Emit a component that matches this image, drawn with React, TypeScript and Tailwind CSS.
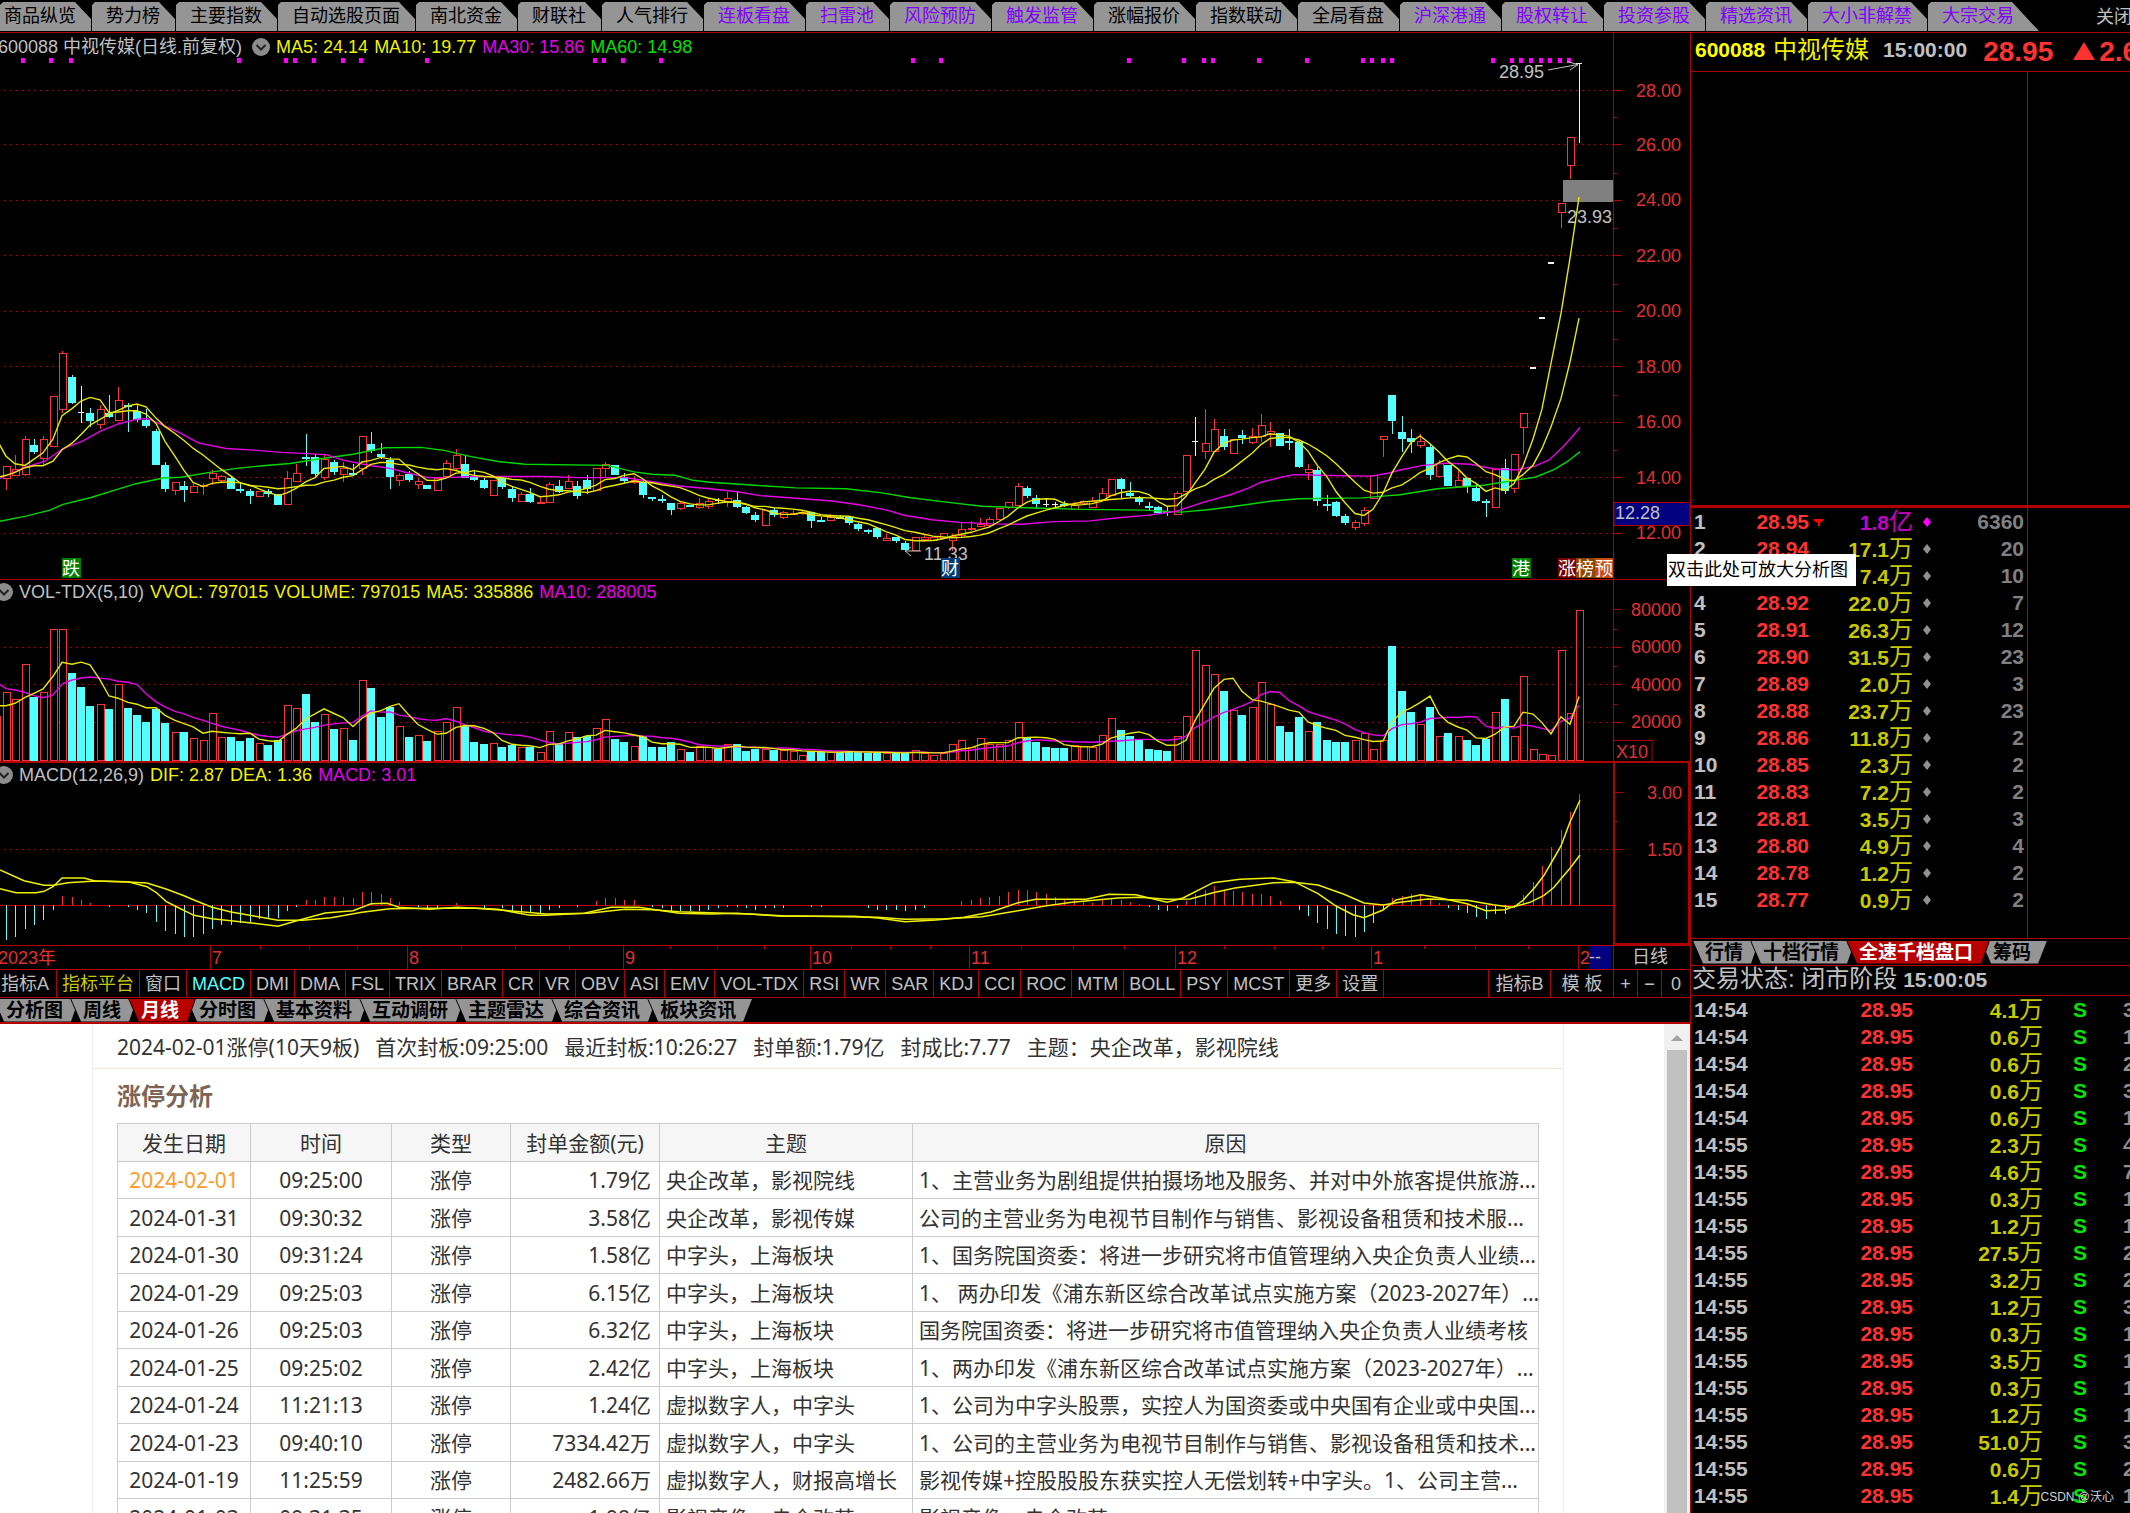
import React from "react";

/* ---------- top navigation ---------- */

const topTabs: { label: string; accent?: boolean }[] = [
  { label: "商品纵览" },
  { label: "势力榜" },
  { label: "主要指数" },
  { label: "自动选股页面" },
  { label: "南北资金" },
  { label: "财联社" },
  { label: "人气排行" },
  { label: "连板看盘", accent: true },
  { label: "扫雷池", accent: true },
  { label: "风险预防", accent: true },
  { label: "触发监管", accent: true },
  { label: "涨幅报价" },
  { label: "指数联动" },
  { label: "全局看盘" },
  { label: "沪深港通", accent: true },
  { label: "股权转让", accent: true },
  { label: "投资参股", accent: true },
  { label: "精选资讯", accent: true },
  { label: "大小非解禁", accent: true },
  { label: "大宗交易", accent: true },
];

function TopBar() {
  return (
    <nav className="flex h-[33px] shrink-0 gap-px overflow-hidden border-b border-[#b00000] bg-black pt-[2px]">
      {topTabs.map((t, i) => {
        const first = i === 0;
        const last = i === topTabs.length - 1;
        const shape = last
          ? "pl-[14px] pr-[25px] [clip-path:polygon(3px_0,calc(100%_-_27px)_0,100%_100%,0_100%,0_3px)]"
          : "pr-[15px] [clip-path:polygon(3px_0,calc(100%_-_16px)_0,100%_17px,100%_100%,0_100%,0_3px)]";
        const left = first ? "pl-1" : last ? "" : "pl-[14px]";
        return (
          <button
            key={t.label}
            type="button"
            className={`h-[29px] shrink-0 whitespace-nowrap bg-[#959595] text-[18px] leading-[29px] ${shape} ${left} ${
              t.accent ? "text-[#8000ff]" : "text-black"
            }`}
          >
            {t.label}
          </button>
        );
      })}
      <button type="button" className="ml-14 shrink-0 text-[18px] leading-[29px] text-[#c0c0c0]">
        关闭
      </button>
    </nav>
  );
}

/* ---------- chart data ----------
   kind, body top, body bottom, wick top, wick bottom, volume top, MACD bar end
   r: rising, c: falling, w/W: unchanged open and close (volume falling / rising) */

type Bar = { k: string; t: number; b: number; h: number; l: number; v: number; m: number };

const barText = `r 1217 1248 1217 1280 397 1137
r 1225 1240 1188 1245 418 1128
r 1147 1238 1140 1245 311 1105
c 1163 1180 1148 1187 412 1092
r 1147 1198 1138 1217 397 1078
r 1036 1166 1036 1166 207 1047
r 923 1068 918 1078 207 1007
c 984 1053 980 1055 340 1011
w 1080 1080 1008 1104 381 1020
c 1078 1100 1067 1117 439 1028
r 1068 1108 1058 1120 432 1035
c 1078 1090 1031 1092 448 1038
r 1045 1097 1011 1100 373 1035
c 1058 1064 1053 1128 444 1038
c 1075 1097 1058 1103 466 1047
c 1097 1113 1070 1118 485 1055
c 1125 1214 1122 1214 447 1083
c 1215 1277 1207 1285 489 1110
r 1260 1280 1260 1293 517 1118
c 1271 1281 1258 1313 516 1128
r 1271 1285 1265 1288 535 1128
r 1268 1270 1262 1293 541 1118
r 1235 1249 1227 1268 460 1105
r 1245 1253 1240 1261 531 1092
c 1250 1277 1245 1277 530 1092
c 1279 1284 1263 1287 543 1087
c 1283 1297 1278 1316 534 1083
r 1283 1297 1283 1297 549 1074
c 1283 1292 1278 1298 556 1070
c 1290 1319 1290 1319 540 1070
r 1249 1318 1230 1320 436 1050
r 1237 1256 1212 1260 445 1037
c 1193 1196 1133 1218 403 1020
c 1193 1239 1185 1243 485 1020
r 1200 1247 1190 1253 463 1011
c 1207 1234 1203 1240 507 1011
r 1224 1239 1207 1260 504 1011
c 1236 1240 1212 1244 539 1015
r 1138 1224 1138 1240 360 997
c 1161 1179 1130 1183 385 997
c 1185 1195 1158 1200 471 1002
c 1201 1246 1195 1277 441 1015
r 1240 1253 1235 1270 499 1025
c 1239 1254 1230 1260 530 1035
r 1256 1265 1250 1277 526 1038
c 1267 1278 1267 1278 543 1047
r 1250 1280 1250 1280 513 1042
r 1209 1245 1203 1248 487 1035
r 1188 1222 1173 1227 441 1028
c 1213 1248 1190 1250 499 1035
c 1246 1253 1230 1257 547 1035
c 1254 1274 1250 1278 552 1042
r 1255 1293 1255 1293 549 1035
c 1250 1273 1250 1278 561 1042
c 1278 1300 1270 1312 556 1051
r 1292 1308 1285 1310 561 1055
c 1290 1312 1275 1314 560 1055
r 1312 1314 1298 1317 576 1056
r 1264 1311 1260 1315 513 1047
c 1270 1285 1255 1287 548 1042
r 1256 1274 1240 1277 517 1035
c 1270 1297 1258 1305 530 1038
c 1254 1277 1240 1290 527 1035
r 1224 1280 1224 1280 504 1024
r 1212 1224 1208 1250 478 1015
c 1216 1241 1216 1241 538 1015
c 1247 1257 1235 1263 547 1020
r 1255 1259 1243 1265 558 1020
c 1260 1293 1255 1300 529 1035
c 1299 1302 1298 1308 561 1038
c 1305 1309 1294 1315 561 1042
c 1314 1332 1314 1347 547 1050
r 1315 1328 1308 1332 567 1050
c 1319 1325 1319 1325 575 1050
r 1315 1326 1300 1330 558 1050
r 1310 1323 1305 1330 560 1047
w 1308 1308 1300 1316 567 1042
r 1301 1309 1285 1325 553 1038
c 1307 1325 1283 1328 552 1038
c 1326 1341 1322 1344 574 1042
c 1346 1360 1337 1364 567 1047
r 1333 1371 1333 1371 567 1042
c 1333 1347 1328 1352 569 1042
r 1339 1351 1335 1355 570 1042
r 1340 1343 1332 1345 573 1035
r 1337 1341 1332 1345 584 1035
c 1339 1361 1339 1380 574 1038
c 1360 1363 1352 1364 576 1038
r 1350 1358 1343 1360 575 1035
c 1350 1354 1345 1355 576 1035
c 1352 1367 1348 1371 574 1035
c 1370 1383 1366 1387 577 1035
c 1385 1388 1381 1396 578 1042
c 1380 1403 1378 1408 578 1047
r 1405 1410 1395 1412 578 1047
c 1402 1414 1402 1420 580 1047
c 1420 1438 1414 1442 580 1051
r 1404 1438 1404 1438 571 1047
r 1404 1408 1395 1415 578 1042
r 1402 1412 1402 1412 584 1035
r 1392 1406 1392 1406 580 1035
r 1400 1412 1395 1440 553 1035
r 1381 1398 1366 1402 541 1024
r 1380 1383 1362 1388 560 1020
r 1368 1374 1353 1378 535 1015
r 1357 1373 1352 1380 552 1011
r 1327 1357 1327 1357 551 1007
r 1311 1324 1311 1330 541 997
r 1271 1319 1262 1322 487 989
c 1274 1295 1270 1300 531 989
c 1302 1318 1294 1330 547 997
w 1320 1320 1304 1324 561 1002
w 1320 1320 1313 1328 565 1011
c 1316 1323 1308 1325 565 1018
r 1319 1329 1311 1333 555 1020
r 1310 1315 1306 1318 557 1025
r 1308 1324 1298 1325 560 1028
r 1287 1306 1275 1310 526 1020
r 1251 1293 1251 1293 473 1015
c 1251 1278 1248 1300 511 1020
c 1288 1295 1260 1300 529 1025
c 1299 1312 1296 1320 540 1032
c 1322 1326 1313 1335 566 1038
c 1325 1341 1322 1343 570 1047
c 1335 1340 1325 1348 574 1051
r 1287 1343 1283 1345 527 1042
r 1189 1284 1189 1284 468 1024
W 1155 1155 1090 1192 270 1002
r 1158 1179 1070 1200 316 990
r 1120 1178 1094 1180 343 979
c 1140 1168 1122 1175 394 990
r 1147 1183 1147 1183 450 992
c 1137 1144 1124 1160 466 997
r 1138 1154 1118 1160 441 1002
r 1111 1138 1082 1155 365 1002
r 1127 1135 1102 1168 432 1007
c 1131 1165 1131 1165 498 1024
c 1153 1157 1122 1175 516 1035
c 1156 1219 1152 1223 471 1047
r 1225 1234 1212 1253 513 1065
c 1228 1308 1220 1322 485 1087
c 1317 1321 1294 1335 539 1105
c 1312 1348 1310 1352 547 1118
c 1348 1367 1342 1372 547 1124
r 1365 1377 1358 1386 541 1128
r 1333 1367 1325 1375 520 1113
r 1241 1301 1241 1301 567 1087
r 1138 1146 1138 1195 540 1047
c 1032 1101 1032 1133 259 1015
c 1130 1148 1087 1180 394 1007
c 1145 1155 1122 1184 457 1003
r 1152 1163 1133 1170 491 1003
c 1167 1241 1160 1253 440 1018
r 1210 1245 1203 1247 527 1029
c 1214 1270 1214 1270 520 1041
r 1253 1270 1231 1272 527 1047
c 1250 1273 1250 1288 539 1055
c 1274 1309 1265 1312 555 1067
c 1310 1315 1305 1352 537 1074
r 1225 1324 1225 1324 455 1060
c 1224 1282 1200 1290 417 1060
r 1186 1276 1186 1288 527 1041
r 1080 1115 1080 1185 347 1006
W 962 962 962 962 566 966
W 832 832 832 832 582 917
W 688 688 688 688 586 862
r 531 555 531 596 270 810
r 359 430 359 467 459 755
W 167 167 167 373 150 701`;

const bars: Bar[] = barText.split("\n").map((line) => {
  const [k, ...n] = line.trim().split(" ");
  const [t, b, h, l, v, m] = n.map(Number);
  return { k, t, b, h, l, v, m };
});

const barX = (i: number) => Math.floor(6.5 + i * 9.366);
const priceY = (v: number) => v / 2.613;
const subY = (v: number) => 560 + v / 3;

const closes = bars.map((d) => (d.k === "c" ? d.b : d.t));
const volumes = bars.map((d) => d.v);

/** Moving average; `lead` holds the values whose window starts before the first bar. */
function average(values: number[], n: number, lead: number[]) {
  const out = lead.map((v, i) => [i - 1, v]);
  for (let i = n - 1; i < values.length; i++) {
    let s = 0;
    for (let j = 0; j < n; j++) s += values[i - j];
    out.push([i, s / n]);
  }
  return out;
}

const toLine = (pts: number[][], y: (v: number) => number) =>
  pts.map(([i, v]) => `${barX(i)},${y(v).toFixed(1)}`).join(" ");

const toFreeLine = (text: string, y: (v: number) => number) =>
  text
    .split(" ")
    .map((p) => {
      const [x, v] = p.split(",").map(Number);
      return `${x},${y(v).toFixed(1)}`;
    })
    .join(" ");

const ma5 = toLine(average(closes, 5, [1150, 1192, 1212, 1216, 1200]), priceY);
const ma10 = toLine(average(closes, 10, [1248, 1242, 1234, 1222, 1217, 1217, 1205, 1175, 1158, 1135]), priceY);
const volMa5 = toLine(average(volumes, 5, [437, 437, 430, 412, 400]), subY);
const volMa10 = toLine(average(volumes, 10, [368, 386, 390, 397, 407, 413, 405, 372, 360, 354]), subY);

const ma30 = toFreeLine(
  "0,1250 24,1222 45,1205 63,1172 82,1153 100,1127 119,1107 137,1095 147,1094 156,1103 175,1125 199,1158 226,1172 254,1176 281,1182 326,1188 344,1203 371,1217 390,1224 408,1236 428,1248 446,1248 471,1245 543,1245 580,1248 625,1248 652,1259 679,1270 710,1277 737,1285 760,1295 796,1302 832,1309 859,1319 887,1333 905,1347 932,1358 959,1365 991,1369 1022,1370 1054,1363 1090,1361 1118,1353 1149,1346 1176,1336 1204,1312 1231,1292 1249,1275 1261,1260 1281,1247 1294,1240 1344,1243 1371,1244 1389,1236 1400,1228 1423,1216 1447,1210 1470,1213 1493,1225 1516,1228 1535,1218 1549,1202 1563,1168 1580,1117",
  priceY,
);
const ma60 = toFreeLine(
  "0,1362 27,1348 50,1333 63,1318 91,1300 118,1278 136,1264 163,1249 181,1247 208,1235 236,1224 263,1217 290,1211 317,1200 353,1187 385,1170 421,1169 444,1177 471,1193 498,1206 525,1213 607,1216 634,1233 652,1239 675,1242 693,1255 710,1260 755,1268 796,1275 846,1277 882,1288 909,1300 946,1312 982,1323 1027,1327 1081,1331 1145,1333 1181,1338 1208,1332 1235,1323 1272,1309 1299,1303 1362,1301 1389,1295 1400,1293 1437,1277 1484,1268 1512,1256 1535,1247 1554,1227 1568,1205 1580,1180",
  priceY,
);
const dif = toFreeLine(
  "0,986 16,998 36,998 44,994 53,980 62,954 84,954 95,963 128,965 147,980 156,997 166,1024 175,1038 194,1066 212,1076 231,1082 254,1090 278,1099 296,1083 325,1059 353,1052 371,1031 387,1030 399,1042 430,1048 457,1042 498,1048 530,1066 546,1066 584,1060 611,1042 639,1042 679,1060 710,1062 737,1060 764,1065 782,1069 855,1069 878,1074 905,1085 936,1080 964,1072 991,1056 1018,1028 1036,1018 1086,1018 1109,1003 1136,1004 1167,1027 1183,1014 1213,968 1240,958 1274,954 1294,965 1318,1001 1336,1038 1353,1064 1364,1073 1383,1050 1396,1020 1421,1004 1440,1014 1467,1031 1486,1052 1505,1049 1516,1037 1523,1021 1535,982 1544,946 1554,894 1561,858 1570,786 1580,721",
  subY,
);
const dea = toFreeLine(
  "0,930 24,962 44,976 54,976 68,968 95,963 128,966 147,969 166,987 184,1007 194,1020 212,1042 231,1056 254,1068 278,1081 303,1081 331,1073 362,1057 390,1046 430,1045 476,1045 521,1055 546,1062 589,1060 625,1048 652,1049 679,1055 710,1058 755,1063 782,1067 878,1072 905,1078 946,1076 982,1070 1018,1052 1045,1038 1072,1027 1118,1014 1140,1012 1167,1018 1190,1017 1213,998 1235,984 1274,968 1294,967 1318,975 1344,1003 1364,1029 1383,1035 1400,1027 1428,1017 1467,1021 1493,1034 1512,1042 1530,1027 1544,1006 1554,982 1561,956 1570,925 1580,885",
  subY,
);

const eventDots = [
  23, 51, 71, 239, 286, 295, 314, 343, 361, 427, 595, 604, 623, 661, 913, 941, 1129, 1184, 1204, 1213, 1259, 1307, 1363,
  1372, 1383, 1392, 1493, 1512, 1521, 1531, 1541, 1550, 1560, 1569,
];

const RED = "#ff3232";
const CYAN = "#54ffff";
const LINE = "#b00000";
const AXIS = "#e03030";
const MAGENTA = "#e800e8";

function Grid({ ys }: { ys: number[] }) {
  return (
    <>
      {ys.map((y) => (
        <line key={y} x1="4" x2="1613" y1={y + 0.5} y2={y + 0.5} stroke="#c00000" strokeDasharray="2 4" opacity="0.85" />
      ))}
    </>
  );
}

function Chevron() {
  return (
    <svg viewBox="0 0 18 18" className="size-[18px] shrink-0" aria-hidden="true">
      <circle cx="9" cy="9" r="9" fill="#8c8c8c" />
      <path d="M4.5 7l4.5 4.5L13.5 7" fill="none" stroke="#222" strokeWidth="2" />
    </svg>
  );
}

function Tag({ x, text, fill }: { x: number; text: string; fill: string }) {
  return (
    <g>
      <rect x={x} y="558" width="19" height="20" fill={fill} />
      <text x={x} y="575" fontSize="18" fill="#fff">
        {text}
      </text>
    </g>
  );
}

function PriceChart() {
  return (
    <svg
      viewBox="0 57 1613 522"
      preserveAspectRatio="none"
      className="block h-[522px] w-full"
      role="img"
      aria-label="日线"
    >
      <Grid ys={[90, 144, 200, 255, 311, 366, 422, 477, 533]} />
      {eventDots.map((x) => (
        <rect key={x} x={x - 2} y="58" width="4" height="5" fill="#ff00ff" />
      ))}
      <g shapeRendering="crispEdges">
        {bars.map((d, i) => {
          const x = barX(i);
          const t = Math.round(priceY(d.t));
          const b = Math.round(priceY(d.b));
          const h = Math.round(priceY(d.h));
          const l = Math.round(priceY(d.l));
          if (d.k === "w" || d.k === "W") {
            return (
              <g key={i} fill="#f0f0f0">
                <rect x={x - 3} y={t - 1} width="6" height={l > h ? 1 : 2} />
                {l > h && <rect x={x} y={h} width="1" height={l - h} />}
              </g>
            );
          }
          if (d.k === "c") {
            return (
              <g key={i} fill={CYAN}>
                <rect x={x - 4} y={t} width="8" height={Math.max(2, b - t)} />
                <rect x={x} y={h} width="1" height={Math.max(1, l - h)} />
              </g>
            );
          }
          return (
            <g key={i} fill={RED}>
              <rect x={x} y={h} width="1" height={Math.max(0, t - h)} />
              <rect x={x} y={b} width="1" height={Math.max(0, l - b)} />
              <rect x={x - 3} y={t} width="7" height={Math.max(1, b - t)} fill="#000" />
              <path d={`M${x - 3} ${t}h7v${Math.max(1, b - t)}h-7z`} fill="none" stroke={RED} />
            </g>
          );
        })}
      </g>
      <rect x="1563" y="180" width="50" height="22" fill="#808080" />
      <text x="1567" y="223" fontSize="18" fill="#c0c0c0">
        23.93
      </text>
      <g fill="none" strokeWidth="1.4">
        <polyline points={ma60} stroke="#00d800" />
        <polyline points={ma30} stroke={MAGENTA} />
        <polyline points={ma10} stroke="#e8e800" />
        <polyline points={ma5} stroke="#e8e800" />
      </g>
      <g fill="none" stroke="#c0c0c0">
        <path d="M1548 70L1578 64.500M1567 61.500L1578 64.500L1570 70" />
        <path d="M921 551H905M911 556L905 551L911 547" />
      </g>
      <text x="1499" y="78" fontSize="18" fill="#c0c0c0">
        28.95
      </text>
      <text x="924" y="560" fontSize="18" fill="#c0c0c0">
        11.33
      </text>
      <Tag x={62} text="跌" fill="#008000" />
      <Tag x={941} text="财" fill="#003c78" />
      <Tag x={1512} text="港" fill="#008000" />
      <Tag x={1558} text="涨" fill="#780000" />
      <Tag x={1576} text="榜" fill="#8c4600" />
      <Tag x={1595} text="预" fill="#c84b14" />
    </svg>
  );
}

function VolumeChart() {
  return (
    <svg
      viewBox="0 604 1613 157"
      preserveAspectRatio="none"
      className="block h-[157px] w-full"
      role="img"
      aria-label="VOL-TDX"
    >
      <Grid ys={[647, 684, 722]} />
      <g shapeRendering="crispEdges">
        <path d="M-6.500 716H0V761" fill="none" stroke={RED} />
        {bars.map((d, i) => {
          const x = barX(i);
          const y = Math.round(subY(d.v));
          return d.k === "c" || d.k === "w" ? (
            <rect key={i} x={x - 4} y={y} width="8" height={761 - y} fill={CYAN} />
          ) : (
            <rect key={i} x={x - 3} y={y} width="7" height={760 - y} fill="#000" stroke={RED} />
          );
        })}
      </g>
      <g fill="none" strokeWidth="1.4">
        <polyline points={volMa10} stroke={MAGENTA} />
        <polyline points={volMa5} stroke="#e8e800" />
      </g>
    </svg>
  );
}

function MacdChart() {
  return (
    <svg
      viewBox="0 787 1613 158"
      preserveAspectRatio="none"
      className="block h-[158px] w-full"
      role="img"
      aria-label="MACD"
    >
      <Grid ys={[849]} />
      <line x1="0" x2="1613" y1="905.5" y2="905.5" stroke="#e00000" strokeDasharray="1 1" />
      <g shapeRendering="crispEdges">
        {bars.map((d, i) => {
          const y = Math.round(subY(d.m));
          return y < 905 ? (
            <rect key={i} x={barX(i)} y={y} width="1" height={905 - y} fill={RED} />
          ) : y > 905 ? (
            <rect key={i} x={barX(i)} y="905" width="1" height={y - 904} fill={CYAN} />
          ) : null;
        })}
      </g>
      <g fill="none" strokeWidth="1.5">
        <polyline points={dea} stroke="#f0f000" />
        <polyline points={dif} stroke="#f0f000" />
      </g>
    </svg>
  );
}

function Ticks({ major, minor }: { major: number[]; minor: number[] }) {
  return (
    <g fill={LINE}>
      {major.map((y) => (
        <rect key={y} x="0" y={y} width="8" height="1" />
      ))}
      {minor.map((y) => (
        <rect key={y} x="0" y={y} width="3" height="1" />
      ))}
    </g>
  );
}

function AxisLabels({ items }: { items: [string, number][] }) {
  return (
    <g fontSize="18" fill={AXIS} textAnchor="end">
      {items.map(([t, y]) => (
        <text key={t} x="67" y={y + 6}>
          {t}
        </text>
      ))}
    </g>
  );
}

const axisCell = "w-[77px] shrink-0 border-l border-[#b00000]";
const legend = "flex items-center whitespace-nowrap text-[18px] leading-none";

function ChartPanel() {
  return (
    <section className="shrink-0">
      <div className="flex h-[547px] border-b border-[#b00000]">
        <div className="min-w-0 flex-1">
          <div className={`${legend} h-6 gap-[6px] pt-[3px] text-[#c0c0c0]`}>
            <span className="-ml-[2px]">600088 中视传媒(日线.前复权)</span>
            <span className="ml-1">
              <Chevron />
            </span>
            <span className="text-[#f0f000]">MA5: 24.14</span>
            <span className="text-[#f0f000]">MA10: 19.77</span>
            <span className="text-[#e800e8]">MA30: 15.86</span>
            <span className="text-[#00e000]">MA60: 14.98</span>
          </div>
          <PriceChart />
        </div>
        <div className={axisCell}>
          <svg viewBox="0 33 76 546" className="block h-[546px] w-[76px]" aria-hidden="true">
            <Ticks
              major={[90, 144, 200, 255, 311, 366, 422, 477, 533]}
              minor={[117, 173, 228, 284, 339, 395, 450]}
            />
            <AxisLabels
              items={[
                ["28.00", 91],
                ["26.00", 145],
                ["24.00", 200],
                ["22.00", 256],
                ["20.00", 311],
                ["18.00", 367],
                ["16.00", 422],
                ["14.00", 478],
                ["12.00", 533],
              ]}
            />
            <rect x="0" y="502.500" width="76" height="23" fill="#000080" stroke={LINE} />
            <text x="1" y="519" fontSize="18" fill="#c0c0c0">
              12.28
            </text>
          </svg>
        </div>
      </div>

      <div className="flex h-[183px] border-b-2 border-[#b00000]">
        <div className="min-w-0 flex-1">
          <div className={`${legend} h-6 gap-[6px] text-[#c0c0c0]`}>
            <span className="-ml-[5px]">
              <Chevron />
            </span>
            <span>VOL-TDX(5,10)</span>
            <span className="text-[#f0f000]">VVOL: 797015</span>
            <span className="text-[#f0f000]">VOLUME: 797015</span>
            <span className="text-[#f0f000]">MA5: 335886</span>
            <span className="text-[#e800e8]">MA10: 288005</span>
          </div>
          <VolumeChart />
        </div>
        <div className={axisCell}>
          <svg viewBox="0 580 76 181" className="block h-[181px] w-[76px]" aria-hidden="true">
            <Ticks major={[609, 647, 684, 722]} minor={[629, 666, 704]} />
            <AxisLabels
              items={[
                ["80000", 610],
                ["60000", 647],
                ["40000", 685],
                ["20000", 722],
              ]}
            />
            <rect x="-1" y="740.500" width="39" height="22" fill="none" stroke={LINE} />
            <text x="2" y="758" fontSize="18" fill={AXIS}>
              X10
            </text>
          </svg>
        </div>
      </div>

      <div className="flex h-[183px] border-b border-[#b00000]">
        <div className="min-w-0 flex-1">
          <div className={`${legend} h-6 gap-[6px] text-[#c0c0c0]`}>
            <span className="-ml-[5px]">
              <Chevron />
            </span>
            <span>MACD(12,26,9)</span>
            <span className="text-[#f0f000]">DIF: 2.87</span>
            <span className="text-[#f0f000]">DEA: 1.36</span>
            <span className="text-[#e800e8]">MACD: 3.01</span>
          </div>
          <MacdChart />
        </div>
        <div className="w-[77px] shrink-0 border-2 border-t-0 border-[#b00000]">
          <svg viewBox="0 763 73 180" className="block h-[180px] w-[73px]" aria-hidden="true">
            <Ticks major={[792, 849]} minor={[821]} />
            <AxisLabels
              items={[
                ["3.00", 793],
                ["1.50", 850],
              ]}
            />
          </svg>
        </div>
      </div>

      <TimeAxis />
    </section>
  );
}

const months: [string, number][] = [
  ["7", 210],
  ["8", 407],
  ["9", 623],
  ["10", 810],
  ["11", 969],
  ["12", 1175],
  ["1", 1371],
];
const weekTicks = [
  260, 309, 357, 461, 515, 569, 670, 717, 764, 851, 890, 930, 1021, 1073, 1124, 1224, 1274, 1322, 1424, 1475, 1528,
];

function TimeAxis() {
  return (
    <div className="flex h-6 border-b border-[#b00000]">
      <div className="min-w-0 flex-1">
        <svg viewBox="0 0 1613 23" preserveAspectRatio="none" className="block h-[23px] w-full" aria-hidden="true">
          <g fill={LINE}>
            {months.map(([m, x]) => (
              <rect key={m} x={x} y="0" width="1" height="23" />
            ))}
            <rect x="1578" y="0" width="1" height="23" />
            {weekTicks.map((x) => (
              <rect key={x} x={x} y="0" width="1" height="3" />
            ))}
          </g>
          <g fontSize="18" fill={AXIS}>
            <text x="-2" y="18">
              2023年
            </text>
            {months.map(([m, x]) => (
              <text key={m} x={x + 2} y="18">
                {m}
              </text>
            ))}
            <text x="1580" y="18">
              2
            </text>
          </g>
          <rect x="1589" y="0" width="22" height="23" fill="#000080" />
          <text x="1589" y="17" fontSize="18" fill="#c0c0c0">
            --
          </text>
        </svg>
      </div>
      <button type="button" className={`${axisCell} pr-1 text-[18px] leading-[23px] text-[#c0c0c0]`}>
        日线
      </button>
    </div>
  );
}

/* ---------- indicator bar and lower tabs ---------- */

const indicators = [
  "指标A",
  "指标平台",
  "窗口",
  "MACD",
  "DMI",
  "DMA",
  "FSL",
  "TRIX",
  "BRAR",
  "CR",
  "VR",
  "OBV",
  "ASI",
  "EMV",
  "VOL-TDX",
  "RSI",
  "WR",
  "SAR",
  "KDJ",
  "CCI",
  "ROC",
  "MTM",
  "BOLL",
  "PSY",
  "MCST",
  "更多",
  "设置",
];

const indicatorButton = "shrink-0 whitespace-nowrap border-r border-[#b00000] text-[18px] leading-[26px]";

function IndicatorBar() {
  return (
    <div className="flex h-7 shrink-0 overflow-hidden border-b border-[#b00000] text-[#c0c0c0]">
      {indicators.map((t, i) => (
        <button
          key={t}
          type="button"
          className={`${indicatorButton} ${i === 0 ? "pl-px pr-[7px]" : "px-[5px]"} ${
            t === "MACD" ? "text-[#54ffff]" : t === "指标平台" ? "text-[#c8c800]" : ""
          }`}
        >
          {t}
        </button>
      ))}
      <div className="ml-auto flex shrink-0">
        <button type="button" className={`${indicatorButton} w-[63px] border-l`}>
          指标B
        </button>
        <button type="button" className={`${indicatorButton} w-[63px]`}>
          模 板
        </button>
        <button type="button" className={`${indicatorButton} w-6`}>
          +
        </button>
        <button type="button" className={`${indicatorButton} w-6`}>
          −
        </button>
        <button type="button" className="w-7 text-[18px] leading-[26px]">
          0
        </button>
      </div>
    </div>
  );
}

function SlantTabs({ items, active }: { items: string[]; active: number }) {
  return (
    <>
      {items.map((t, i) => {
        let shape =
          "[clip-path:polygon(0_0,calc(100%_-_9px)_0,calc(100%_-_4px)_50%,calc(100%_-_8px)_100%,10px_100%)]";
        if (i === active) shape = "[clip-path:polygon(0_0,100%_0,calc(100%_-_8px)_100%,10px_100%)]";
        else if (i === active + 1 && i === items.length - 1)
          shape = "[clip-path:polygon(9px_0,100%_0,calc(100%_-_9px)_100%,10px_100%,5px_50%)]";
        else if (i === active + 1)
          shape =
            "[clip-path:polygon(9px_0,calc(100%_-_9px)_0,calc(100%_-_4px)_50%,calc(100%_-_8px)_100%,10px_100%,5px_50%)]";
        else if (i === items.length - 1) shape = "[clip-path:polygon(0_0,100%_0,calc(100%_-_9px)_100%,10px_100%)]";
        return (
          <button
            key={t}
            type="button"
            className={`-mr-2 h-[23px] shrink-0 whitespace-nowrap pl-3 pr-4 text-[19px] font-bold leading-6 ${shape} ${
              i === active ? "bg-[#b80000] text-white" : "bg-[#959595] text-black"
            }`}
          >
            {t}
          </button>
        );
      })}
    </>
  );
}

/* ---------- limit-up analysis ---------- */

const summary = [
  "2024-02-01涨停(10天9板)",
  "首次封板:09:25:00",
  "最近封板:10:26:27",
  "封单额:1.79亿",
  "封成比:7.77",
  "主题：央企改革，影视院线",
];

const analysis = [
  ["2024-02-01", "09:25:00", "1.79亿", "央企改革，影视院线", "1、主营业务为剧组提供拍摄场地及服务、并对中外旅客提供旅游..."],
  ["2024-01-31", "09:30:32", "3.58亿", "央企改革，影视传媒", "公司的主营业务为电视节目制作与销售、影视设备租赁和技术服..."],
  ["2024-01-30", "09:31:24", "1.58亿", "中字头，上海板块", "1、国务院国资委：将进一步研究将市值管理纳入央企负责人业绩..."],
  ["2024-01-29", "09:25:03", "6.15亿", "中字头，上海板块", "1、 两办印发《浦东新区综合改革试点实施方案（2023-2027年）..."],
  ["2024-01-26", "09:25:03", "6.32亿", "中字头，上海板块", "国务院国资委：将进一步研究将市值管理纳入央企负责人业绩考核"],
  ["2024-01-25", "09:25:02", "2.42亿", "中字头，上海板块", "1、两办印发《浦东新区综合改革试点实施方案（2023-2027年）..."],
  ["2024-01-24", "11:21:13", "1.24亿", "虚拟数字人，中字头", "1、公司为中字头股票，实控人为国资委或中央国有企业或中央国..."],
  ["2024-01-23", "09:40:10", "7334.42万", "虚拟数字人，中字头", "1、公司的主营业务为电视节目制作与销售、影视设备租赁和技术..."],
  ["2024-01-19", "11:25:59", "2482.66万", "虚拟数字人，财报高增长", "影视传媒+控股股股东获实控人无偿划转+中字头。1、公司主营..."],
  ["2024-01-03", "09:31:35", "1.98亿", "影视音像，央企改革", "影视音像，央企改革"],
];

function Analysis() {
  const cell = "border border-[#cccccc] whitespace-nowrap overflow-hidden";
  return (
    <section className="flex min-h-0 flex-1 bg-white font-['Noto_Sans','Noto_Sans_CJK_SC',sans-serif] text-[21px] leading-6 text-[#333333]">
      <div className="ml-[92px] mr-[100px] min-w-0 flex-1 overflow-hidden border-x border-[#eeeeee]">
        <p className="flex h-[45px] items-center gap-4 overflow-hidden whitespace-nowrap border-b border-[#f8e4cc] pl-6 pt-px">
          {summary.map((s) => (
            <span key={s}>{s}</span>
          ))}
        </p>
        <div className="px-6">
          <h2 className="h-[54px] text-[24px] font-bold leading-[54px] text-[#7d6455]">涨停分析</h2>
          <table className="w-full table-fixed border-collapse">
            <colgroup>
              <col className="w-[133px]" />
              <col className="w-[141px]" />
              <col className="w-[119px]" />
              <col className="w-[149px]" />
              <col className="w-[253px]" />
              <col />
            </colgroup>
            <thead>
              <tr className="h-[38px] bg-[#f6f6f6]">
                {["发生日期", "时间", "类型", "封单金额(元)", "主题", "原因"].map((h) => (
                  <th key={h} scope="col" className={`${cell} font-normal`}>
                    {h}
                  </th>
                ))}
              </tr>
            </thead>
            <tbody>
              {analysis.map(([date, time, amount, theme, reason], i) => (
                <tr key={date} className="odd:h-[37px] even:h-[38px]">
                  <td className={`${cell} text-center ${i === 0 ? "text-[#ff9a28]" : ""}`}>{date}</td>
                  <td className={`${cell} text-center`}>{time}</td>
                  <td className={`${cell} text-center`}>涨停</td>
                  <td className={`${cell} pr-2 text-right`}>{amount}</td>
                  <td className={`${cell} pl-[6px]`}>{theme}</td>
                  <td className={`${cell} pl-[6px]`}>{reason}</td>
                </tr>
              ))}
            </tbody>
          </table>
        </div>
      </div>
      <div className="flex w-[26px] shrink-0 flex-col bg-[#f0f0f0] px-[3px]">
        <svg viewBox="0 0 20 26" className="h-[26px] w-5 shrink-0" aria-hidden="true">
          <path d="M4 17h12l-6-6z" fill="#a3a3a3" />
        </svg>
        <div className="flex-1 bg-[#c1c1c1]" />
      </div>
    </section>
  );
}

/* ---------- right column ---------- */

const orders: [string, string, string, string][] = [
  ["28.95", "1.8", "亿", "6360"],
  ["28.94", "17.1", "万", "20"],
  ["28.93", "7.4", "万", "10"],
  ["28.92", "22.0", "万", "7"],
  ["28.91", "26.3", "万", "12"],
  ["28.90", "31.5", "万", "23"],
  ["28.89", "2.0", "万", "3"],
  ["28.88", "23.7", "万", "23"],
  ["28.86", "11.8", "万", "2"],
  ["28.85", "2.3", "万", "2"],
  ["28.83", "7.2", "万", "2"],
  ["28.81", "3.5", "万", "3"],
  ["28.80", "4.9", "万", "4"],
  ["28.78", "1.2", "万", "2"],
  ["28.77", "0.9", "万", "2"],
];

const trades: [string, string, string][] = [
  ["14:54", "4.1", "3"],
  ["14:54", "0.6", "1"],
  ["14:54", "0.6", "2"],
  ["14:54", "0.6", "3"],
  ["14:54", "0.6", "1"],
  ["14:55", "2.3", "4"],
  ["14:55", "4.6", "7"],
  ["14:55", "0.3", "1"],
  ["14:55", "1.2", "1"],
  ["14:55", "27.5", "2"],
  ["14:55", "3.2", "2"],
  ["14:55", "1.2", "3"],
  ["14:55", "0.3", "1"],
  ["14:55", "3.5", "1"],
  ["14:55", "0.3", "1"],
  ["14:55", "1.2", "1"],
  ["14:55", "51.0", "3"],
  ["14:55", "0.6", "2"],
  ["14:55", "1.4", "1"],
];

function Unit({ children }: { children: string }) {
  return <span className="text-[24px] font-normal leading-none">{children}</span>;
}

function QuotePanel() {
  return (
    <aside className="flex w-[440px] shrink-0 flex-col overflow-hidden border-l border-[#b00000] text-[21px] font-bold leading-5">
      <header className="flex h-[39px] shrink-0 items-center whitespace-nowrap border-b border-[#b00000] pb-1 pl-1 text-[#c0c0c0]">
        <span className="shrink-0 text-[#ffff00]">600088</span>
        <span className="ml-2 shrink-0 text-[24px] font-normal text-[#f0f000]">中视传媒</span>
        <span className="ml-[14px] shrink-0">15:00:00</span>
        <span className="ml-4 shrink-0 pt-1 text-[28px] text-[#ff3232]">28.95</span>
        <svg viewBox="0 0 22 18" className="ml-5 mt-[2px] h-[18px] w-[22px] shrink-0" aria-hidden="true">
          <path d="M11 0l11 18H0z" fill="#ff3232" />
        </svg>
        <span className="ml-1 shrink-0 pt-1 text-[28px] text-[#ff3232]">2.63</span>
      </header>

      <div className="h-[433px] w-[337px] shrink-0 border-r border-[#b00000]" />

      <div className="shrink-0 border-b border-t-[3px] border-[#b00000]">
        <div className="h-[430px] w-[337px] border-r border-[#b00000]">
          <table className="w-full table-fixed border-collapse">
            <colgroup>
              <col className="w-[60px]" />
              <col className="w-[59px]" />
              <col className="w-[14px]" />
              <col className="w-[89px]" />
              <col className="w-[28px]" />
              <col />
            </colgroup>
            <tbody>
              {orders.map(([price, vol, unit, count], i) => (
                <tr key={price} className="h-[27px] whitespace-nowrap">
                  <td className="pl-[3px] text-[#c0c0c0]">{i + 1}</td>
                  <td className="pr-px text-right text-[#ff3232]">{price}</td>
                  <td>
                    {i === 0 && (
                      <svg viewBox="0 0 14 10" className="ml-1 block h-[10px] w-[14px]" aria-hidden="true">
                        <path d="M0 2h9v2L6 6v3H4V6L0 4z" fill="#ff0000" />
                      </svg>
                    )}
                  </td>
                  <td className={`text-right ${i === 0 ? "text-[#c800c8]" : "text-[#c8c800]"}`}>
                    {vol}
                    <Unit>{unit}</Unit>
                  </td>
                  <td>
                    <svg viewBox="0 0 8 10" className="mx-auto block h-[10px] w-2" aria-hidden="true">
                      <path d="M4 0l4 5-4 5-4-5z" fill={i === 0 ? "#ff00ff" : "#909090"} />
                    </svg>
                  </td>
                  <td className="pr-[3px] text-right text-[#808080]">{count}</td>
                </tr>
              ))}
            </tbody>
          </table>
        </div>
      </div>

      <div className="flex h-[27px] shrink-0 items-center border-b border-[#b00000] pl-[2px]">
        <SlantTabs items={["行情", "十档行情", "全速千档盘口", "筹码"]} active={2} />
      </div>
      <p className="h-[30px] shrink-0 whitespace-nowrap border-b border-[#b00000] pl-px leading-7 text-[#c0c0c0]">
        <span className="text-[24px] font-normal leading-none">交易状态: 闭市阶段</span> 15:00:05
      </p>

      <table className="w-[460px] table-fixed border-collapse">
        <colgroup>
          <col className="w-[100px]" />
          <col className="w-[122px]" />
          <col className="w-[130px]" />
          <col className="w-[80px]" />
          <col />
        </colgroup>
        <tbody>
          {trades.map(([time, vol, n], i) => (
            <tr key={i} className="h-[27px] whitespace-nowrap">
              <td className="pl-[3px] text-[#c0c0c0]">{time}</td>
              <td className="text-right text-[#ff3232]">28.95</td>
              <td className="text-right text-[#c8c800]">
                {vol}
                <Unit>万</Unit>
              </td>
              <td className="pl-[30px] text-[#00e600]">S</td>
              <td className="text-[#909090]">{n}</td>
            </tr>
          ))}
        </tbody>
      </table>
    </aside>
  );
}

export default function App() {
  return (
    <div
      lang="zh-CN"
      className="relative flex h-screen flex-col overflow-hidden bg-black font-['Liberation_Sans','Noto_Sans_CJK_SC',sans-serif]"
    >
      <TopBar />
      <div className="flex min-h-0 flex-1">
        <main className="flex min-w-0 flex-1 flex-col">
          <ChartPanel />
          <IndicatorBar />
          <div className="flex h-[26px] shrink-0 items-center overflow-hidden border-b-2 border-[#b80000]">
            <div className="-ml-[6px] flex">
              <SlantTabs
                items={[
                  "分析图",
                  "周线",
                  "月线",
                  "分时图",
                  "基本资料",
                  "互动调研",
                  "主题雷达",
                  "综合资讯",
                  "板块资讯",
                ]}
                active={2}
              />
            </div>
          </div>
          <Analysis />
        </main>
        <QuotePanel />
      </div>

      <div
        role="tooltip"
        className="absolute right-[274px] top-[554px] h-8 w-[189px] whitespace-nowrap bg-white pl-px text-[18px] leading-[33px] text-black"
      >
        双击此处可放大分析图
      </div>
      <span className="absolute bottom-[6px] right-4 whitespace-nowrap text-[12px] leading-5 text-[#d0d0d0]">
        CSDN @沃心
      </span>
    </div>
  );
}
